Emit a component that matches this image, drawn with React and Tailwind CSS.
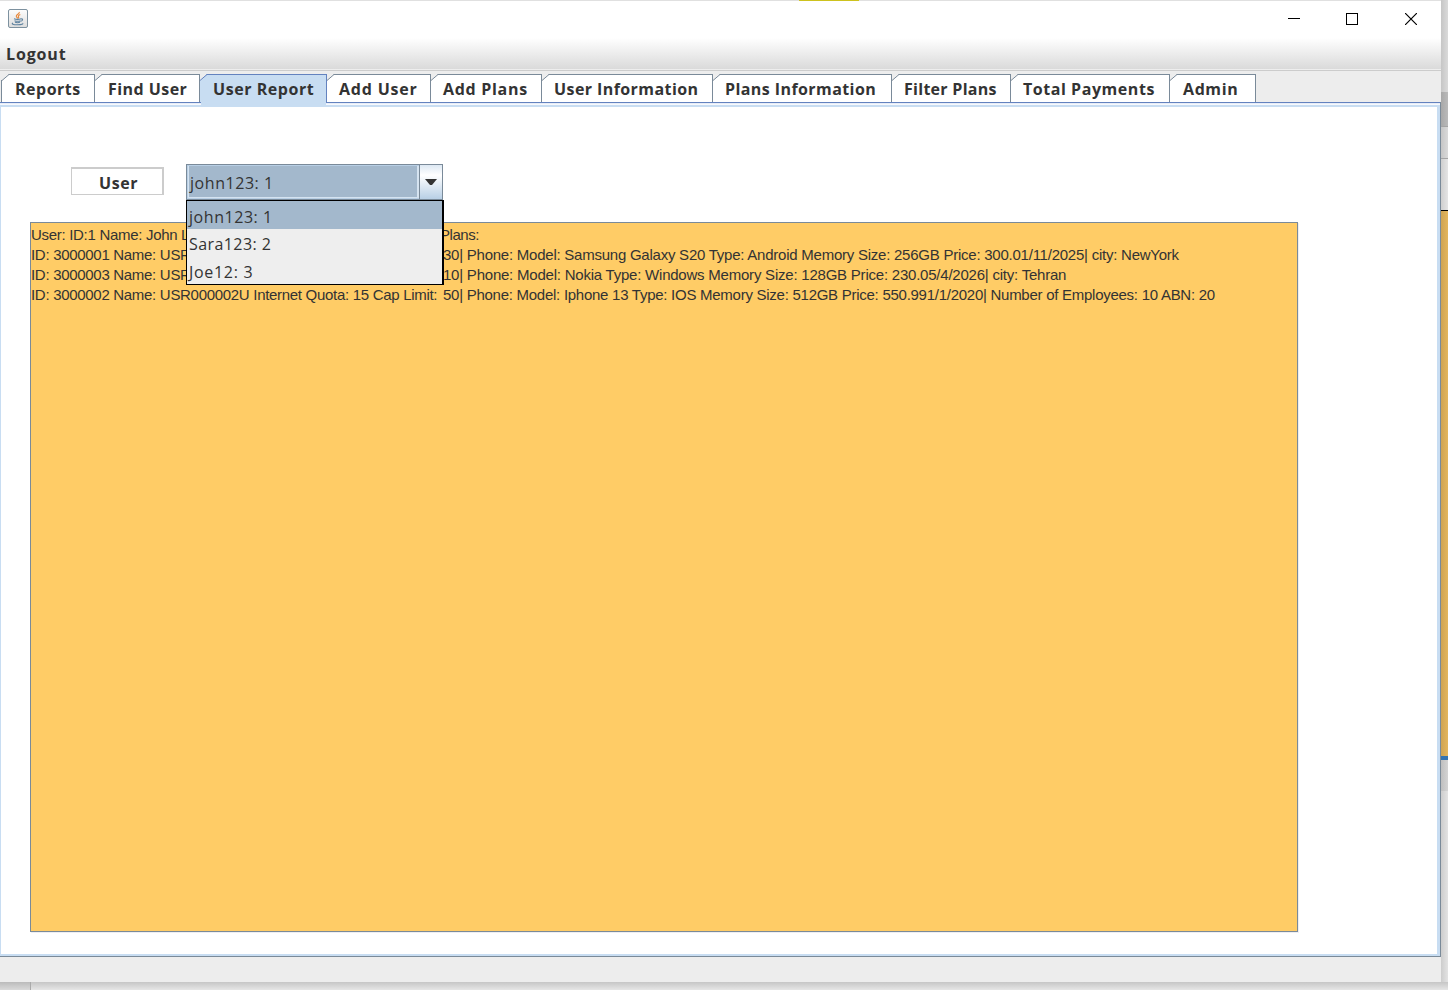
const tabs = [
  { label: "Reports", w: "w-[93px]", ls: "tracking-[0.5px]", pl: "pl-[13px]" },
  { label: "Find User", w: "w-[105px]", ls: "tracking-[0.45px]", pl: "pl-[13px]" },
  { label: "User Report", w: "w-[127px]", ls: "tracking-[0.55px]", pl: "pl-[13px]", active: true },
  { label: "Add User", w: "w-[104px]", ls: "tracking-[0.8px]", pl: "pl-[12px]" },
  { label: "Add Plans", w: "w-[111px]", ls: "tracking-[0.7px]", pl: "pl-[12px]" },
  { label: "User Information", w: "w-[171px]", ls: "tracking-[0.42px]", pl: "pl-[12px]" },
  { label: "Plans Information", w: "w-[179px]", ls: "tracking-[0.42px]", pl: "pl-[12px]" },
  { label: "Filter Plans", w: "w-[119px]", ls: "tracking-[0.28px]", pl: "pl-[12px]" },
  { label: "Total Payments", w: "w-[159px]", ls: "tracking-[0.55px]", pl: "pl-[12px]" },
  { label: "Admin", w: "w-[86px]", ls: "tracking-[0.6px]", pl: "pl-[13px]" },
];

const rows = [
  { a: "User: ID:1 Name: John L", b: "Plans:", ls: "tracking-[-0.45px]", w: "w-[409px]" },
  { a: "ID: 3000001 Name: USR", b: "30| Phone: Model: Samsung Galaxy S20 Type: Android Memory Size: 256GB Price: 300.01/11/2025| city: NewYork", ls: "tracking-[-0.24px]", w: "w-[412px]" },
  { a: "ID: 3000003 Name: USR", b: "10| Phone: Model: Nokia Type: Windows Memory Size: 128GB Price: 230.05/4/2026| city: Tehran", ls: "tracking-[-0.222px]", w: "w-[412px]" },
  { a: "ID: 3000002 Name: USR000002U Internet Quota: 15 Cap Limit:", b: "50| Phone: Model: Iphone 13 Type: IOS Memory Size: 512GB Price: 550.991/1/2020| Number of Employees: 10 ABN: 20", ls: "tracking-[-0.265px]", w: "w-[412px]" },
];

function JavaIcon() {
  return (
    <svg width="20" height="19" viewBox="0 0 20 19">
      <defs>
        <linearGradient id="jb" x1="0" y1="0" x2="0" y2="1">
          <stop offset="0" stopColor="#fdfdfd" />
          <stop offset="1" stopColor="#dcdcdc" />
        </linearGradient>
      </defs>
      <rect x="0.5" y="0.5" width="19" height="18" rx="1.5" fill="url(#jb)" stroke="#7d919f" />
      <path d="M11.3 3c.5 2-3.300 2.400-3 4.300.1 1 1.200 1.300 1.500 2.200M12.300 5.500c-1.300.5-2.300 1.200-1.800 2.200.4.8.4 1-.2 1.800" fill="none" stroke="#e8893c" strokeWidth="1.200" />
      <path d="M6 9.800c2 .7 5 .7 7 0M6.500 11.700c2 .7 4.500.7 6 0M7 13.300c1.500.5 3.500.5 5 0M13 10c2.300-.6 2 1.800-.3 2.200M5 14c-2 .8 0 1.700 4.500 1.700s6-.8 5-1.500" fill="none" stroke="#5f83a0" strokeWidth="1.100" />
    </svg>
  );
}

function Tab({ t }) {
  const line = t.active ? "#6382bf" : "#7a8a99";
  return (
    <div className={"relative h-[28px] shrink-0 " + t.w}>
      <div
        className={
          "h-full [clip-path:polygon(7px_0,100%_0,100%_100%,0_100%,0_7px)] border-t border-r " +
          (t.active ? "bg-[#c8ddf2] border-[#6382bf]" : "bg-white border-[#7a8a99]")
        }
      >
        <div className={"pt-[1px] leading-[26px] whitespace-nowrap " + t.pl}>
          <span className={t.ls}>{t.label}</span>
        </div>
      </div>
      <svg className="absolute left-0 top-0" width="8" height="8">
        <path d="M0 6.500L7 0.500" stroke={line} fill="none" />
      </svg>
    </div>
  );
}

export default function App() {
  return (
    <div className="w-[1448px] h-[990px] overflow-hidden flex flex-col bg-[#e0e0e0] font-['Open_Sans','Noto_Sans',sans-serif] text-[16px] text-[#333]">
      <div className="flex h-[982px]">
        <div className="w-[1441px] h-[982px] flex flex-col bg-[#ededed]">
          <div className="h-[38px] shrink-0 border-t border-[#e0e0e0] bg-white flex">
            <div className="w-[799px] pl-[8px] pt-[8px]"><JavaIcon /></div>
            <div className="w-[60px] h-px -mt-px bg-[#cdc21e]" />
            <div className="ml-auto flex pt-[12px] pr-[24px] text-black">
              <svg className="mr-[46px]" width="12" height="12"><path d="M0 5.500H12" stroke="#000" /></svg>
              <svg className="mr-[47px]" width="12" height="12"><rect x=".5" y=".5" width="11" height="11" fill="none" stroke="#000" /></svg>
              <svg width="12" height="12"><path d="M0 0L12 12M12 0L0 12" stroke="#000" strokeWidth="1.200" /></svg>
            </div>
          </div>
          <div className="h-[31px] shrink-0 bg-linear-to-b from-white to-[#dadada] pl-[6px] font-bold leading-[33px]"><span className="tracking-[0.85px]">Logout</span></div>
          <div className="h-[2px] shrink-0 bg-[#cccccc] border-t border-[#eee]" />
          <div className="h-[31px] shrink-0 pt-[3px] pl-px flex font-bold">
            <div className="w-px h-[22px] mt-[6px] bg-[#7a8a99] shrink-0" />
            {tabs.map((t) => <Tab key={t.label} t={t} />)}
          </div>
          <div className="h-[3px] shrink-0 flex border-r border-[#7a8a99]">
            <div className="w-[201px] border-t border-[#6382bf] bg-linear-to-b from-[#dfe7f6] to-white" />
            <div className="w-[125px] bg-[#c8ddf2]" />
            <div className="grow border-t border-[#6382bf] bg-linear-to-b from-[#dfe7f6] to-white" />
          </div>
          <div className="h-[851px] shrink-0 border-r border-[#7a8a99]">
            <div className="h-full bg-white border-t-2 border-b-2 border-l border-r-3 border-[#c8ddf2]">
              <div className="pl-[70px] pt-[57px] flex">
                <div className="w-[93px] h-[28px] mt-[3px] border-2 border-b border-l border-[#ccc] pl-[27px] font-bold leading-[29px]"><span className="tracking-[0.6px]">User</span></div>
                <div className="relative ml-[22px] w-[257px] h-[36px] border border-[#7a8a99] flex">
                  <div className="w-[232px] h-[34px] pl-px py-px bg-[#b8cfe5]">
                    <div className="h-[32px] border-l border-b border-r-2 border-[#d5e3f0] bg-[#a3b8cc] leading-[35px] pl-px"><span className="tracking-[0.55px]">john123: 1</span></div>
                  </div>
                  <div className="w-[23px] border-l border-[#7a8a99] bg-linear-to-b from-[#dde8f3] via-white via-30% to-[#b8cfe5] flex items-center justify-center">
                    <svg width="12" height="6"><path d="M0 0H12L7 6H5Z" fill="#333" /></svg>
                  </div>
                  <div className="absolute z-10 left-[-1px] top-[35px] w-[258px] h-[85px] border border-r-2 border-black bg-[#eee]">
                    <div className="pl-[2px] h-[28px] bg-[#a3b8cc] leading-[32px]"><span className="tracking-[0.55px]">john123: 1</span></div>
                    <div className="h-[27px] leading-[31px] pl-[2px]"><span className="tracking-[0.42px]">Sara123: 2</span></div>
                    <div className="h-[28px] leading-[32px] pl-[2px]"><span className="tracking-[0.7px]">Joe12: 3</span></div>
                  </div>
                </div>
              </div>
              <div className="ml-[29px] mt-[22px] w-[1268px] h-[710px] border border-[#7a8a99] shadow-[1px_1px_0_#eeeef2] bg-[#ffcc66] pt-[2px] font-['Liberation_Sans',Arial,sans-serif] text-[15px] leading-[20px]">
                {rows.map((r) => (
                  <div key={r.a} className="flex whitespace-nowrap h-[20px]">
                    <div className={"shrink-0 tracking-[-0.3px] " + r.w}>{r.a}</div>
                    <span className={r.ls}>{r.b}</span>
                  </div>
                ))}
              </div>
            </div>
          </div>
          <div className="h-px bg-[#7a8a99]" />
        </div>
        <div className="w-[7px] flex flex-col">
          <div className="h-[92px] bg-linear-to-r from-[#c6c6c6] to-[#dadada]" />
          <div className="h-[34px] bg-linear-to-r from-[#a8a8a8] to-[#bababa]" />
          <div className="h-[32px] bg-linear-to-r from-[#c6c6c6] to-[#dadada] border-t border-[#a4a4a4]" />
          <div className="h-[52px] bg-linear-to-r from-[#cfcfcf] to-[#e5e5e5] border-t border-[#a4a4a4]" />
          <div className="h-[546px] bg-linear-to-r from-[#cfa453] to-[#e4b65c] border-t border-black" />
          <div className="h-[4px] bg-[#3474b0]" />
          <div className="h-[31px] bg-linear-to-r from-[#bfbfbf] to-[#d4d4d4]" />
          <div className="grow bg-linear-to-r from-[#cdcdcd] to-[#e3e3e3]" />
        </div>
      </div>
      <div className="h-[8px] bg-linear-to-b from-[#c6c6c6] to-[#e6e6e6] flex"><div className="w-[31px] border-r border-[#aaa] bg-black/5" /></div>
    </div>
  );
}
